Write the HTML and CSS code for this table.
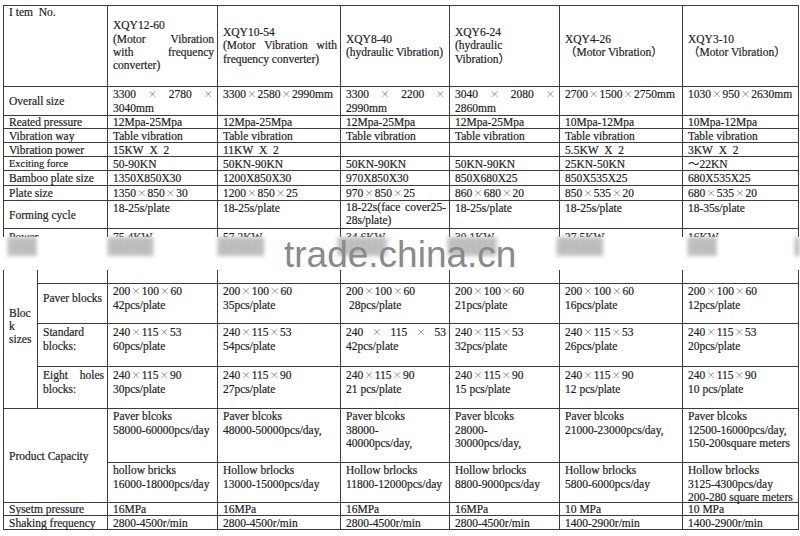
FILE: index.html
```html
<!DOCTYPE html>
<html>
<head>
<meta charset="utf-8">
<title>XQY block machine specification</title>
<link rel="stylesheet" href="styles.css">
</head>
<body>
<div class="sheet">
  <!-- header -->
  <div class="c lab hd-top">I tem&nbsp; No.</div>
  <div class="c mid hd"><div>XQY12-60<br>(Motor Vibration with frequency converter)</div></div>
  <div class="c mid hd"><div>XQY10-54<br>(Motor Vibration with frequency converter)</div></div>
  <div class="c mid hd"><div>XQY8-40<br>(hydraulic Vibration)</div></div>
  <div class="c mid hd"><div>XQY6-24<br>(hydraulic<br>Vibration）</div></div>
  <div class="c mid hd"><div>XQY4-26<br>（Motor Vibration）</div></div>
  <div class="c mid hd"><div>XQY3-10<br>（Motor Vibration）</div></div>

  <!-- overall size -->
  <div class="c lab mid">Overall size</div>
  <div class="c">3300 <span class="x">×</span> 2780 <span class="x">×</span> 3040mm</div>
  <div class="c">3300<span class="x">×</span>2580<span class="x">×</span>2990mm</div>
  <div class="c">3300 <span class="x">×</span> 2200 <span class="x">×</span> 2990mm</div>
  <div class="c">3040 <span class="x">×</span> 2080 <span class="x">×</span> 2860mm</div>
  <div class="c">2700<span class="x">×</span>1500<span class="x">×</span>2750mm</div>
  <div class="c">1030<span class="x">×</span>950<span class="x">×</span>2630mm</div>

  <!-- reated pressure -->
  <div class="c lab mid">Reated pressure</div>
  <div class="c mid">12Mpa-25Mpa</div>
  <div class="c mid">12Mpa-25Mpa</div>
  <div class="c mid">12Mpa-25Mpa</div>
  <div class="c mid">12Mpa-25Mpa</div>
  <div class="c mid">10Mpa-12Mpa</div>
  <div class="c mid">10Mpa-12Mpa</div>

  <!-- vibration way -->
  <div class="c lab mid">Vibration way</div>
  <div class="c mid">Table vibration</div>
  <div class="c mid">Table vibration</div>
  <div class="c mid">Table vibration</div>
  <div class="c mid">Table vibration</div>
  <div class="c mid">Table vibration</div>
  <div class="c mid">Table vibration</div>

  <!-- vibration power -->
  <div class="c lab mid">Vibration power</div>
  <div class="c mid">15KW&nbsp; X&nbsp; 2</div>
  <div class="c mid">11KW&nbsp; X&nbsp; 2</div>
  <div class="c mid"></div>
  <div class="c mid"></div>
  <div class="c mid">5.5KW&nbsp; X&nbsp; 2</div>
  <div class="c mid">3KW&nbsp; X&nbsp; 2</div>

  <!-- exciting force -->
  <div class="c lab mid small">Exciting force</div>
  <div class="c mid">50-90KN</div>
  <div class="c mid">50KN-90KN</div>
  <div class="c mid">50KN-90KN</div>
  <div class="c mid">50KN-90KN</div>
  <div class="c mid">25KN-50KN</div>
  <div class="c mid">～22KN</div>

  <!-- bamboo plate size -->
  <div class="c lab mid">Bamboo plate size</div>
  <div class="c mid">1350X850X30</div>
  <div class="c mid">1200X850X30</div>
  <div class="c mid">970X850X30</div>
  <div class="c mid">850X680X25</div>
  <div class="c mid">850X535X25</div>
  <div class="c mid">680X535X25</div>

  <!-- plate size -->
  <div class="c lab mid">Plate size</div>
  <div class="c mid"><div>1350<span class="x">×</span>850<span class="x">×</span>30</div></div>
  <div class="c mid"><div>1200<span class="x">×</span>850<span class="x">×</span>25</div></div>
  <div class="c mid"><div>970<span class="x">×</span>850<span class="x">×</span>25</div></div>
  <div class="c mid"><div>860<span class="x">×</span>680<span class="x">×</span>20</div></div>
  <div class="c mid"><div>850<span class="x">×</span>535<span class="x">×</span>20</div></div>
  <div class="c mid"><div>680<span class="x">×</span>535<span class="x">×</span>20</div></div>

  <!-- forming cycle -->
  <div class="c lab mid">Forming cycle</div>
  <div class="c">18-25s/plate</div>
  <div class="c">18-25s/plate</div>
  <div class="c lh13">18-22s(face cover25-<wbr>28s/plate)</div>
  <div class="c">18-25s/plate</div>
  <div class="c">18-25s/plate</div>
  <div class="c">18-35s/plate</div>

  <!-- power -->
  <div class="c lab mid">Power</div>
  <div class="c mid">75.4KW</div>
  <div class="c mid">57.2KW</div>
  <div class="c mid">34.6KW</div>
  <div class="c mid">30.1KW</div>
  <div class="c mid">27.5KW</div>
  <div class="c mid">16KW</div>

  <!-- block sizes -->
  <div class="c mid blk"><div>Bloc<wbr>k sizes</div></div>
  <div class="c"></div>
  <div class="c"></div>
  <div class="c"></div>
  <div class="c"></div>
  <div class="c"></div>
  <div class="c"></div>
  <div class="c"></div>

  <div class="c sub pav">Paver blocks</div>
  <div class="c">200<span class="x">×</span>100<span class="x">×</span>60<br>42pcs/plate</div>
  <div class="c">200<span class="x">×</span>100<span class="x">×</span>60<br>35pcs/plate</div>
  <div class="c">200<span class="x">×</span>100<span class="x">×</span>60<br>&nbsp;28pcs/plate</div>
  <div class="c">200<span class="x">×</span>100<span class="x">×</span>60<br>21pcs/plate</div>
  <div class="c">200<span class="x">×</span>100<span class="x">×</span>60<br>16pcs/plate</div>
  <div class="c">200<span class="x">×</span>100<span class="x">×</span>60<br>12pcs/plate</div>

  <div class="c sub blkrow">Standard blocks:</div>
  <div class="c blkrow">240<span class="x">×</span>115<span class="x">×</span>53<br>60pcs/plate</div>
  <div class="c blkrow">240<span class="x">×</span>115<span class="x">×</span>53<br>54pcs/plate</div>
  <div class="c blkrow">240 <span class="x">×</span> 115 <span class="x">×</span> 53 42pcs/plate</div>
  <div class="c blkrow">240<span class="x">×</span>115<span class="x">×</span>53<br>32pcs/plate</div>
  <div class="c blkrow">240<span class="x">×</span>115<span class="x">×</span>53<br>26pcs/plate</div>
  <div class="c blkrow">240<span class="x">×</span>115<span class="x">×</span>53<br>20pcs/plate</div>

  <div class="c sub blkrow">Eight holes blocks:</div>
  <div class="c blkrow">240<span class="x">×</span>115<span class="x">×</span>90<br>30pcs/plate</div>
  <div class="c blkrow">240<span class="x">×</span>115<span class="x">×</span>90<br>27pcs/plate</div>
  <div class="c blkrow">240<span class="x">×</span>115<span class="x">×</span>90<br>21 pcs/plate</div>
  <div class="c blkrow">240<span class="x">×</span>115<span class="x">×</span>90<br>15 pcs/plate</div>
  <div class="c blkrow">240<span class="x">×</span>115<span class="x">×</span>90<br>12 pcs/plate</div>
  <div class="c blkrow">240<span class="x">×</span>115<span class="x">×</span>90<br>10 pcs/plate</div>

  <!-- product capacity -->
  <div class="c lab mid cap-lab">Product Capacity</div>
  <div class="c cap">Paver blcoks<br>58000-60000pcs/day</div>
  <div class="c cap">Paver blcoks<br>48000-50000pcs/day,</div>
  <div class="c cap">Paver blcoks<br>38000-<br>40000pcs/day,</div>
  <div class="c cap">Paver blcoks<br>28000-<br>30000pcs/day,</div>
  <div class="c cap">Paver blcoks<br>21000-23000pcs/day,</div>
  <div class="c cap">Paver blcoks<br>12500-16000pcs/day,<br>150-200square meters</div>

  <div class="c cap">hollow bricks<br>16000-18000pcs/day</div>
  <div class="c cap">Hollow brlocks<br>13000-15000pcs/day</div>
  <div class="c cap">Hollow brlocks<br>11800-12000pcs/day</div>
  <div class="c cap">Hollow brlocks<br>8800-9000pcs/day</div>
  <div class="c cap">Hollow brlocks<br>5800-6000pcs/day</div>
  <div class="c cap">Hollow brlocks<br>3125-4300pcs/day<br>200-280 square meters</div>

  <!-- system pressure -->
  <div class="c lab mid">Sysetm pressure</div>
  <div class="c mid">16MPa</div>
  <div class="c mid">16MPa</div>
  <div class="c mid">16MPa</div>
  <div class="c mid">16MPa</div>
  <div class="c mid">10 MPa</div>
  <div class="c mid">10 MPa</div>

  <!-- shaking frequency -->
  <div class="c lab mid">Shaking frequency</div>
  <div class="c mid">2800-4500r/min</div>
  <div class="c mid">2800-4500r/min</div>
  <div class="c mid">2800-4500r/min</div>
  <div class="c mid">2800-4500r/min</div>
  <div class="c mid">1400-2900r/min</div>
  <div class="c mid">1400-2900r/min</div>
</div>

<div class="smudge">
  <span class="blob b1"></span>
  <span class="blob b2"></span>
  <span class="blob b3"></span>
  <span class="blob b4"></span>
  <span class="blob b5"></span>
  <span class="blob b6"></span>
  <span class="blob b7"></span>
  <span class="blob b8"></span>
</div>
<div class="mark">trade.china.cn</div>
</body>
</html>
```

FILE: styles.css
```css
html, body {
  margin: 0;
  padding: 0;
  background: #ffffff;
}

body {
  width: 800px;
  height: 536px;
  overflow: hidden;
  font-family: "Liberation Serif", "Noto Sans CJK SC", serif;
  font-size: 11.5px;
  line-height: 14px;
  color: #1a1a1a;
}

.sheet {
  display: grid;
  grid-template-columns: 34px 70px 110px 123px 109px 110px 123px 116px;
  grid-template-rows: 81px 29px 13px 14px 14px 14px 15px 15px 28px 16px 39px 40px 43px 42px 54px 40px 13px 14px;
  width: max-content;
  margin: 5px 0 0 3px;
  border-top: 1px solid #3c3c3c;
  border-left: 1px solid #3c3c3c;
  -webkit-text-stroke: 0.2px #2a2a2a;
}

.c {
  box-sizing: border-box;
  min-width: 0;
  border-right: 1px solid #3c3c3c;
  border-bottom: 1px solid #3c3c3c;
  padding: 0 3px 0 5px;
  text-align: justify;
  white-space: normal;
}

.lab {
  grid-column: span 2;
}

.mid {
  display: flex;
  flex-direction: column;
  justify-content: center;
}

.hd {
  line-height: 13.4px;
}

.hd-top {
  line-height: 13.5px;
}

.small {
  font-size: 10.4px;
}

.lh13 {
  line-height: 13px;
}

.x {
  display: inline-block;
  width: 11.5px;
  text-align: center;
  font-family: "Noto Sans CJK SC", sans-serif;
  font-size: 10px;
  font-weight: 300;
  color: #6a6a6a;
  line-height: 1;
  -webkit-text-stroke: 0;
}

.blk {
  grid-row: span 4;
  line-height: 13px;
  text-align: left;
}

.pav {
  padding-top: 7px;
}

.blkrow {
  padding-top: 1px;
}

.cap {
  line-height: 13.5px;
  padding-top: 1px;
}

.cap-lab {
  grid-row: span 2;
}

/* damaged band of the original scan */
.smudge {
  position: absolute;
  left: 0;
  top: 237px;
  width: 800px;
  height: 33px;
  background: #ffffff;
}

.blob {
  position: absolute;
  top: 0;
  height: 19px;
  background: repeating-linear-gradient(90deg, #9c9c9c 0 3px, #c9c9c9 3px 6px);
  filter: blur(2px);
  opacity: 0.85;
}

.b1 { left: 8px;   width: 29px; }
.b2 { left: 108px; width: 45px; }
.b3 { left: 218px; width: 46px; }
.b4 { left: 338px; width: 49px; }
.b5 { left: 448px; width: 49px; }
.b6 { left: 557px; width: 46px; }
.b7 { left: 688px; width: 29px; }
.b8 { left: 795px; width: 5px; }

.mark {
  position: absolute;
  left: 284px;
  top: 236px;
  font-family: "Liberation Sans", Arial, sans-serif;
  font-size: 37px;
  line-height: 37px;
  color: #8a8a8a;
  white-space: nowrap;
}
```
